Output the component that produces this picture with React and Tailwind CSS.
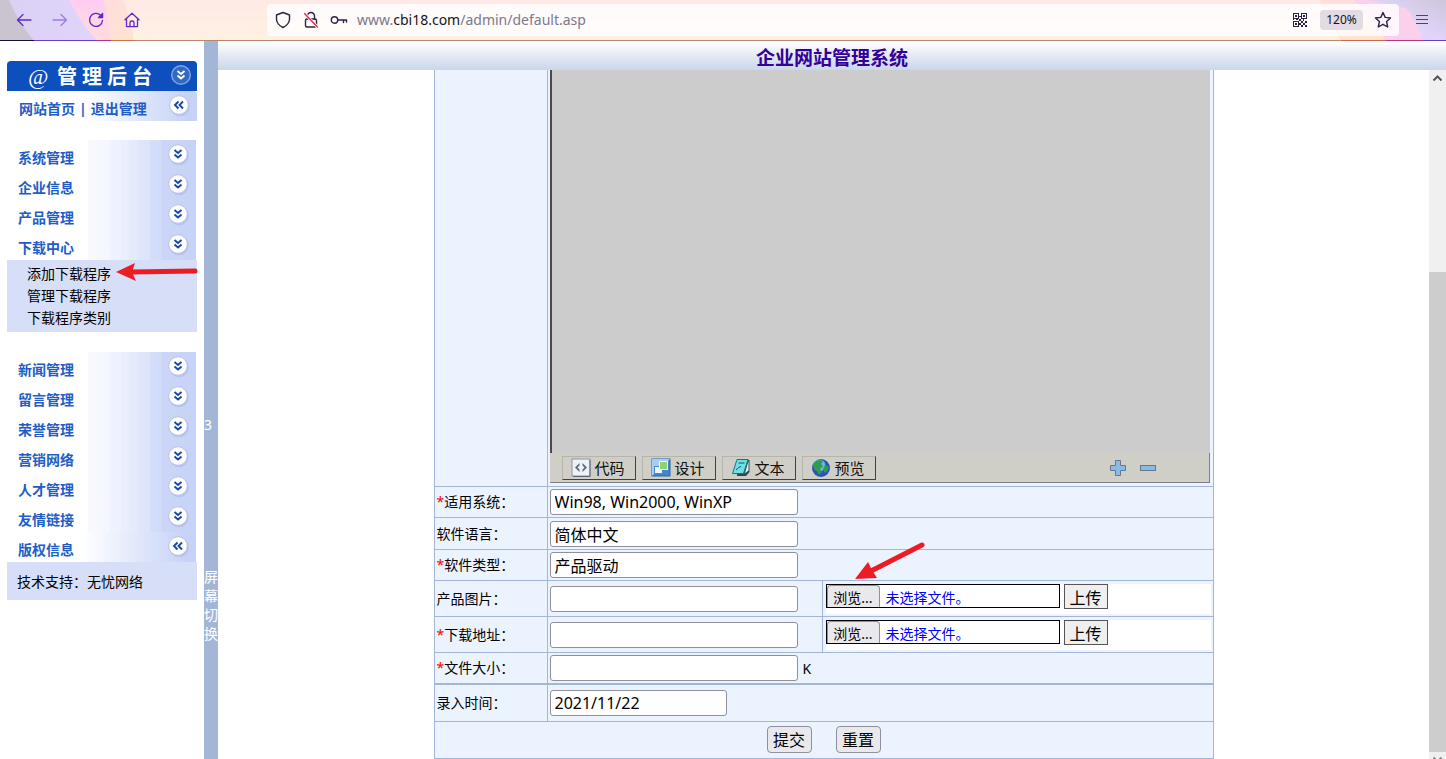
import React from 'react';

const MENU_TOP = ['系统管理', '企业信息', '产品管理', '下载中心'];
const SUBMENU = ['添加下载程序', '管理下载程序', '下载程序类别'];
const MENU_BOTTOM = ['新闻管理', '留言管理', '荣誉管理', '营销网络', '人才管理', '友情链接'];

function ThemeBackdrop() {
  return (
    <svg className="absolute inset-0 h-full w-full" aria-hidden="true">
      <defs>
        <linearGradient id="peach" x1="0" y1="0" x2="0" y2="1">
          <stop offset="0" stopColor="#ffe9e6" />
          <stop offset="1" stopColor="#fff2e2" />
        </linearGradient>
        <linearGradient id="rose" x1="0" y1="0" x2="0" y2="1">
          <stop offset="0" stopColor="#ffcdf3" />
          <stop offset="1" stopColor="#ffdcdc" />
        </linearGradient>
        <linearGradient id="apricot" x1="0" y1="0" x2="0" y2="1">
          <stop offset="0" stopColor="#ffdedd" />
          <stop offset="1" stopColor="#ffe3cf" />
        </linearGradient>
        <linearGradient id="lilac" x1="0" y1="0" x2="1" y2="0">
          <stop offset="0" stopColor="#d9d0f3" />
          <stop offset="1" stopColor="#e2d4fc" />
        </linearGradient>
        <linearGradient id="dusk" x1="0" y1="1" x2="1" y2="0">
          <stop offset="0" stopColor="#e3d5fc" />
          <stop offset="0.500" stopColor="#e0d4f8" />
          <stop offset="1" stopColor="#cdc6dc" />
        </linearGradient>
      </defs>
      <rect width="100%" height="41" fill="url(#peach)" />
      <path d="M0 0H123Q131 20 134 41H0Z" fill="url(#apricot)" />
      <path d="M0 0H103Q110 20 111 41H0Z" fill="url(#rose)" />
      <path d="M0 0H69Q80 22 97 41H0Z" fill="url(#lilac)" />
      <path d="M0 0H9Q18 22 34 41H0Z" fill="#c9c4d0" />
      <path d="M0 40.500H34" stroke="#1e1036" />
      <path d="M34 40.500H97" stroke="#6b3dcf" />
      <path d="M97 40.500H111" stroke="#b5347f" />
      <path d="M111 40.500H134" stroke="#c8744f" />
      <path d="M134 40.500H4000" stroke="#bb8573" />
      <svg x="100%" width="130" height="41" overflow="visible">
        <path d="M-126 0H0V41H-105Z" fill="url(#apricot)" />
        <path d="M-92 0H0V41H-60Q-74 20 -92 0Z" fill="#fbd0ea" />
        <path d="M-77 0H0V41H-23Q-28 22 -40 8Q-56 5 -77 0Z" fill="url(#dusk)" />
        <path d="M-105 40.500H-60" stroke="#d0664a" />
        <path d="M-60 40.500H-23" stroke="#b5347f" />
        <path d="M-23 40.500H0" stroke="#6b3dcf" />
      </svg>
    </svg>
  );
}

function NavButton({ label, faded, children }) {
  return (
    <button type="button" aria-label={label} className={`flex h-8 w-9 items-center justify-center ${faded ? 'opacity-50' : ''}`}>
      <svg width="16" height="16" viewBox="0 0 16 16" fill="none" stroke="#5b2bc9" strokeWidth="1.300" strokeLinecap="round" strokeLinejoin="round">
        {children}
      </svg>
    </button>
  );
}

function AddressIcon({ label, children }) {
  return (
    <button type="button" aria-label={label} className="flex h-8 w-7 shrink-0 items-center justify-center">
      <svg width="18" height="18" viewBox="0 0 18 18" fill="none" stroke="#2b2244" strokeWidth="1.400" strokeLinejoin="round" strokeLinecap="round">
        {children}
      </svg>
    </button>
  );
}

function BrowserBar() {
  return (
    <header className="relative flex h-[41px] shrink-0 items-center pb-px pl-[6px]">
      <ThemeBackdrop />
      <div className="relative flex w-[261px] shrink-0">
        <NavButton label="后退"><path d="M15 8H1.500M7 2.500L1.500 8L7 13.500" /></NavButton>
        <NavButton label="前进" faded><path d="M1 8H14.500M9 2.500L14.500 8L9 13.500" /></NavButton>
        <NavButton label="刷新">
          <path d="M12.500 3.200A6.500 6.500 0 1 0 14.500 8.500" />
          <path d="M14.600 1.500V5.500H10.600Z" fill="#5b2bc9" />
        </NavButton>
        <NavButton label="主页">
          <path d="M1 7.800L8 1.200L15 7.800M2.500 6.500V14.600H13.500V6.500M6 14.500V10.500Q6 9 8 9T10 10.500V14.500" />
        </NavButton>
      </div>
      <div className="relative mr-[47px] flex h-8 min-w-0 flex-1 items-center rounded bg-white/80 pl-[2px]">
        <AddressIcon label="跟踪保护">
          <path d="M9 1.500L15.500 4V8.500Q15 13.500 9 16.500Q3 13.500 2.500 8.500V4Z" />
        </AddressIcon>
        <AddressIcon label="连接不安全">
          <path d="M5.500 8V5A3.500 3.500 0 0 1 12.500 5V8" />
          <rect x="3.500" y="8" width="11" height="8" rx="1.500" />
          <path d="M2.500 2.500L15.500 16" stroke="#fffdfb" strokeWidth="3" />
          <path d="M2.500 2.500L15.500 16" stroke="#e22850" />
        </AddressIcon>
        <AddressIcon label="密码">
          <circle cx="4.500" cy="9" r="3.200" />
          <path d="M8 9H16.500V11M13.500 9V11.500" />
        </AddressIcon>
        <div className="relative ml-[4px] min-w-0 flex-1 text-[14px] leading-8">
          <input aria-label="网址" className="absolute inset-0 w-full bg-transparent outline-none" />
          <span className="pointer-events-none relative text-[#7c788c]">www.<span className="text-[#15141a]">cbi18.com</span>/admin/default.asp</span>
        </div>
        <button type="button" aria-label="二维码" className="mr-3 p-px">
          <svg width="14" height="14" viewBox="0 0 14 14" fill="#2b2244">
            <path fillRule="evenodd" d="M0 0H6V6H0ZM1 1V5H5V1ZM8 0H14V6H8ZM9 1V5H13V1ZM0 8H6V14H0ZM1 9V13H5V9Z" />
            <path d="M2 2h2v2h-2zM10 2h2v2h-2zM2 10h2v2h-2zM6 3h2v1h-2zM6 6h2v2h-2zM0 6h1v1h-1zM3 6h2v1h-2zM8 8h2v2h-2zM10 6h1v2h-1zM12 8h2v2h-2zM10 10h2v2h-2zM8 12h2v2h-2zM12 12h2v2h-2zM6 10h2v2h-2z" />
          </svg>
        </button>
        <button type="button" className="h-5 w-[43px] rounded bg-[#e2dbe2] text-[12px] leading-5 text-[#15141a]">120%</button>
        <button type="button" aria-label="收藏" className="ml-[11px] mr-[7px]">
          <svg width="18" height="18" viewBox="0 0 18 18" fill="none" stroke="#2b2244" strokeWidth="1.400" strokeLinejoin="round">
            <path d="M9 1.500L11.200 6.400L16.500 7L12.600 10.600L13.700 16L9 13.300L4.300 16L5.400 10.600L1.500 7L6.800 6.400Z" />
          </svg>
        </button>
      </div>
      <button type="button" aria-label="菜单" className="absolute right-[18px] top-[14px]">
        <svg width="12" height="11" viewBox="0 0 12 11" stroke="#5b2bc9" strokeWidth="1.200">
          <path d="M0 1.500H12M0 5.500H12M0 9.500H12" />
        </svg>
      </button>
    </header>
  );
}

function Knob({ side, blue }) {
  const stroke = blue ? '#ffffff' : '#1746a8';
  return (
    <svg width="24" height="24" viewBox="0 0 24 24" className="shrink-0" aria-hidden="true">
      {!blue && <circle cx="13" cy="13.500" r="9.800" fill="#8f9fd6" opacity="0.300" />}
      <circle cx="12" cy="12" r="9.300" fill={blue ? '#3368c4' : '#ffffff'} stroke={blue ? '#7ea3e0' : '#b9c1e2'} strokeWidth={blue ? 1.500 : 1} />
      <path
        d={side ? 'M11.500 8.500L8 12L11.500 15.500M16 8.500L12.500 12L16 15.500' : 'M8.500 8L12 11L15.500 8M8.500 12.500L12 15.500L15.500 12.500'}
        fill="none"
        stroke={stroke}
        strokeWidth="1.900"
      />
    </svg>
  );
}

function MenuRow({ label, side }) {
  const fill = side
    ? 'bg-[linear-gradient(to_right,#ffffff_40%,#c6d3f7_95%)]'
    : 'bg-[linear-gradient(to_right,#ffffff_81px,#f7f9fe_81px,#f5f7fe_103px,#f0f3fe_103px,#eef1fe_114px,#ebeffd_114px,#e9eefd_122px,#e5ebfc_122px,#e4eafc_131px,#dfe6fb_131px,#dde4fa_143px,#d4ddf9_143px,#d1dbf9_155px,#cbd6f7_155px,#c6d3f7_189px)]';
  return (
    <a href="#" className={`mr-px flex h-[30px] items-start justify-between pl-[11px] pr-[6px] ${fill}`}>
      <span className="pt-2 text-[14px] font-bold leading-5 text-[#215dc6]">{label}</span>
      <span className="pt-[2px]"><Knob side={side} /></span>
    </a>
  );
}

function RedArrow({ className, width, height, line, head }) {
  return (
    <svg className={`pointer-events-none absolute ${className}`} width={width} height={height} aria-hidden="true">
      <path d={line} stroke="#ed1c24" strokeWidth="5" strokeLinecap="round" />
      <path d={head} fill="#ed1c24" />
    </svg>
  );
}

function Sidebar() {
  return (
    <nav className="w-[204px] shrink-0 bg-white pl-[7px] pr-[7px] pt-5">
      <div className="flex h-[30px] items-start justify-between rounded-t bg-[#0d4fbd] pl-[21px] pr-1 text-white">
        <h1 className="flex items-center gap-[5px] text-[20px] font-bold leading-8">
          <span className="w-6 font-['Liberation_Serif',serif] text-[22px] font-normal italic">@</span>
          <span>管</span><span>理</span><span>后</span><span>台</span>
        </h1>
        <span className="pt-[2px]"><Knob blue /></span>
      </div>
      <div className="flex h-[30px] items-start justify-between rounded-tr bg-[linear-gradient(to_right,#ffffff_40%,#c6d3f7_95%)] pl-3 pr-[6px]">
        <span className="flex gap-1 pt-2 text-[14px] font-bold leading-5 text-[#215dc6]">
          <a href="#">网站首页</a><span>|</span><a href="#">退出管理</a>
        </span>
        <span className="pt-[2px]"><Knob side /></span>
      </div>
      <div className="mt-[19px]">
        {MENU_TOP.map((label) => <MenuRow key={label} label={label} />)}
      </div>
      <div className="relative mb-5 h-[72px] bg-[#d6dff7] pl-5 pt-[3px] text-[14px] leading-[22px] text-black">
        {SUBMENU.map((label) => <a key={label} href="#" className="block">{label}</a>)}
        <RedArrow className="left-[108px] top-0" width="84" height="24" line="M16 12L80 11" head="M1 12L20 3L17 12L21 21Z" />
      </div>
      {MENU_BOTTOM.map((label) => <MenuRow key={label} label={label} />)}
      <MenuRow label="版权信息" side />
      <p className="h-[38px] bg-[#d6dff7] pl-[10px] text-[14px] leading-10 text-black">技术支持：无忧网络</p>
    </nav>
  );
}

const TAB_ICONS = {
  代码: (
    <>
      <rect x="1" y="1" width="18" height="17" fill="#eef1f5" stroke="#8b96a5" />
      <path d="M19 2V18.500H2" stroke="#56657c" fill="none" />
      <path d="M8.500 5L4 9.500L8.500 14V11.500L6.500 9.500L8.500 7.500ZM11.500 5L16 9.500L11.500 14V11.500L13.500 9.500L11.500 7.500Z" fill="#5a6b82" />
    </>
  ),
  设计: (
    <>
      <rect x="1" y="1" width="18" height="17" fill="#3f87cf" stroke="#2466ad" />
      <path d="M1 1H19L1 18Z" fill="#a9cdf0" />
      <rect x="3.500" y="8.500" width="8" height="7" fill="#eaf4ff" stroke="#4d86c4" />
      <rect x="8.500" y="3.500" width="8" height="8" fill="#8fd276" stroke="#e9f7e5" />
    </>
  ),
  文本: (
    <>
      <path d="M7 2H18.500V14L15 18H6Z" fill="#2c4a52" />
      <path d="M13 16L17.500 12.500V3L14 15" fill="#d9fbfb" />
      <path d="M6 1.500H17L12.500 15.500H1.500Z" fill="#6fe0e3" stroke="#17767d" />
      <path d="M7.500 5H13.500M5 12Q8 8.500 10 8.500" stroke="#0e5b62" fill="none" />
    </>
  ),
  预览: (
    <>
      <circle cx="10" cy="10" r="9" fill="#2a55b8" />
      <circle cx="8.500" cy="7.500" r="6" fill="#6fb0ee" />
      <path d="M3 5Q7 0 12 3L10 6L12 8L9 11L11 14L8 17Q6 13 4 11Q1 9 3 5ZM14 7L18 9Q17 13 14 15L12 11Z" fill="#2f9e4a" />
    </>
  ),
};

function EditorTab({ label }) {
  return (
    <button
      type="button"
      className="flex h-6 w-[74px] items-center gap-1 border border-b-[#404040] border-l-[#b5b5ad] border-r-[#404040] border-t-[#b5b5ad] pl-2 text-[15px] leading-5 text-[#111111]"
    >
      <svg width="20" height="20" viewBox="0 0 20 20" className="shrink-0" aria-hidden="true">{TAB_ICONS[label]}</svg>
      {label}
    </button>
  );
}

function Editor() {
  return (
    <div className="flex flex-1 flex-col pb-[3px] pl-[2px] pr-[3px]">
      <div className="flex-1 border-l-2 border-[#4a4a4a] bg-[#cccccc]" />
      <div className="flex h-[30px] items-start gap-[6px] border-b border-r border-[#808080] bg-[#d0cfc7] pl-3 pt-[3px]">
        {Object.keys(TAB_ICONS).map((label) => <EditorTab key={label} label={label} />)}
        <div className="ml-auto mr-[53px] flex gap-[14px] pt-[4px]">
          <button type="button" aria-label="增高编辑区">
            <svg width="16" height="16" viewBox="0 0 16 16"><path d="M5.500 .5H10.500V5.500H15.500V10.500H10.500V15.500H5.500V10.500H.5V5.500H5.500Z" fill="#8abbe6" stroke="#66788c" /></svg>
          </button>
          <button type="button" aria-label="减小编辑区">
            <svg width="16" height="16" viewBox="0 0 16 16"><rect x=".5" y="5.500" width="15" height="5" fill="#8abbe6" stroke="#66788c" /></svg>
          </button>
        </div>
      </div>
    </div>
  );
}

const ROW_HEIGHTS = { short: 'h-[31px]', medium: 'h-8', tall: 'h-9' };

function Row({ id, label, required, size = 'short', value = '', narrow, suffix, className = '', children }) {
  return (
    <div className={`flex border-t border-[#a3b5d9] ${ROW_HEIGHTS[size]} ${className}`}>
      <label htmlFor={id} className="flex w-[113px] shrink-0 items-center border-r border-[#a3b5d9] pl-[2px] text-[14px] leading-5">
        {required && <span className="text-[#ff0000]">*</span>}{label}：
      </label>
      <div className="flex flex-1 items-center gap-[5px] pl-[2px] text-[14px]">
        <input
          id={id}
          defaultValue={value}
          className={`h-[26px] rounded-[3px] border border-[#8f8f9d] bg-white px-1 text-[16px] leading-6 text-black ${narrow ? 'w-[177px]' : 'w-[248px]'}`}
        />
        {suffix}
      </div>
      {children}
    </div>
  );
}

function Upload({ id, children }) {
  return (
    <div className="relative w-[391px] shrink-0 border-l border-[#a3b5d9] pb-[2px] pl-[3px] pr-[2px] pt-[3px]">
      <div className="flex h-full items-start gap-1 bg-white">
        <label htmlFor={id} className="flex h-6 w-[234px] items-stretch gap-[6px] border border-black bg-white text-[14px] leading-[26px] text-[#0000ff]">
          <span className="w-[53px] rounded-t border border-b-0 border-[#8f8f9d] bg-[#e9e9ed] text-center leading-6 text-black">浏览...</span>
          未选择文件。
          <input id={id} type="file" className="sr-only" />
        </label>
        <button type="button" className="h-[25px] w-11 border border-[#555555] bg-[#efefef] pt-px text-[16px] leading-6 text-black">上传</button>
      </div>
      {children}
    </div>
  );
}

function DownloadForm() {
  return (
    <form className="mx-auto flex h-full min-h-[420px] w-full max-w-[780px] flex-col border-x border-b border-[#a3b5d9] bg-[#ebf3ff] text-black">
      <div className="flex min-h-24 flex-1">
        <div className="w-[113px] shrink-0 border-r border-[#a3b5d9]" />
        <Editor />
      </div>
      <Row id="system" label="适用系统" required value="Win98, Win2000, WinXP" />
      <Row id="language" label="软件语言" value="简体中文" size="medium" />
      <Row id="type" label="软件类型" required value="产品驱动" />
      <Row id="image" label="产品图片" size="tall">
        <Upload id="image-file">
          <RedArrow className="left-[30px] top-[-40px]" width="74" height="42" line="M69 4L20 29" head="M2 38L15 21L19 29L24 37Z" />
        </Upload>
      </Row>
      <Row id="address-url" label="下载地址" required size="tall">
        <Upload id="download-file" />
      </Row>
      <Row id="size" label="文件大小" required suffix="K" />
      <Row id="date" label="录入时间" value="2021/11/22" narrow size="tall" className="box-content border-t-2" />
      <div className="flex h-[37px] items-start justify-center gap-6 border-t border-[#a3b5d9] pt-1">
        <button type="submit" className="h-[27px] w-[45px] rounded border border-[#8f8f9d] bg-[#e9e9ed] text-[16px] leading-6">提交</button>
        <button type="reset" className="h-[27px] w-[45px] rounded border border-[#8f8f9d] bg-[#e9e9ed] text-[16px] leading-6">重置</button>
      </div>
    </form>
  );
}

function ScrollTrack() {
  return (
    <div className="flex w-[17px] shrink-0 flex-col items-center bg-[#f0f0f0]" aria-hidden="true">
      <svg width="17" height="17" viewBox="0 0 17 17" fill="none" stroke="#555555" strokeWidth="2"><path d="M4.500 10.500L8.500 6.500L12.500 10.500" /></svg>
      <div className="grow-[185]" />
      <div className="w-full grow-[480] bg-[#cdcdcd]" />
      <svg width="17" height="7" viewBox="0 0 17 7" fill="none" stroke="#8a8a8a" strokeWidth="2"><path d="M4.500 5.500L8.500 9.500L12.500 5.500" /></svg>
    </div>
  );
}

export default function App() {
  return (
    <div className="flex h-screen flex-col overflow-hidden bg-white font-['Noto_Sans','Noto_Sans_CJK_SC',sans-serif]">
      <BrowserBar />
      <div className="flex min-h-0 flex-1">
        <Sidebar />
        <button type="button" className="flex w-[14px] shrink-0 flex-col items-start bg-[#a4b6d7] pt-[374px] text-[14px] leading-[19px] text-white">
          <span>3</span>
          <span className="mt-[133px] w-[14px] break-all">屏幕切换</span>
        </button>
        <main className="flex min-w-0 flex-1 flex-col">
          <h2 className="h-[29px] shrink-0 bg-linear-to-b from-white to-[#cad6ea] text-center text-[19px] font-bold leading-[34px] text-[#330099]">企业网站管理系统</h2>
          <div className="flex min-h-0 flex-1">
            <div className="min-w-0 flex-1 overflow-hidden"><DownloadForm /></div>
            <ScrollTrack />
          </div>
        </main>
      </div>
    </div>
  );
}
